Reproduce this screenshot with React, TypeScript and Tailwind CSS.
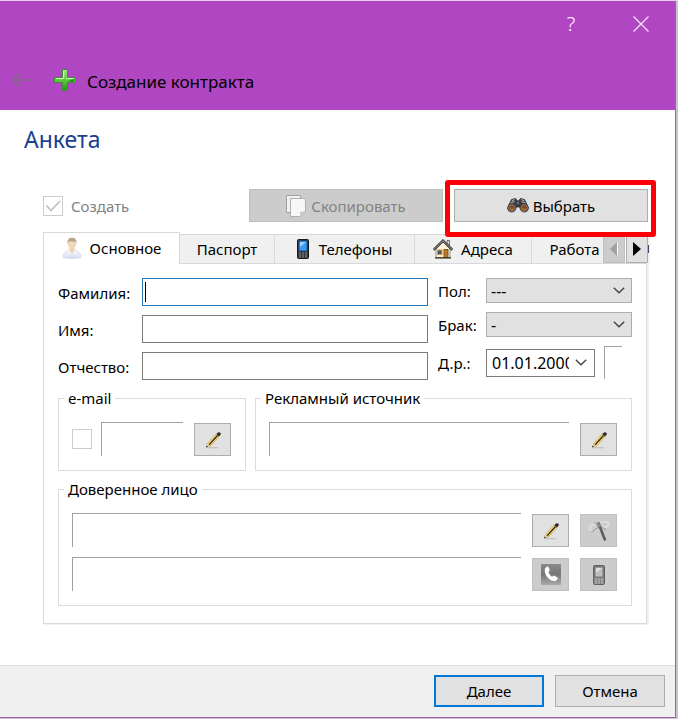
import type { ReactNode } from "react";

function ChevronIcon() {
  return (
    <svg width="12" height="7" viewBox="0 0 12 7" fill="none" stroke="#404040" strokeWidth="1.3" aria-hidden="true">
      <path d="M0.8 0.8 L6 5.8 L11.2 0.8" />
    </svg>
  );
}

function PlusIcon() {
  return (
    <svg width="22" height="22" viewBox="0 0 22 22" aria-hidden="true">
      <defs>
        <linearGradient id="plus" x1="0" y1="0" x2="0" y2="1">
          <stop offset="0" stopColor="#a5ea8c" />
          <stop offset="0.5" stopColor="#5dcb3f" />
          <stop offset="1" stopColor="#1d9a12" />
        </linearGradient>
      </defs>
      <path d="M8.5 0.5 h5 v8 h8 v5 h-8 v8 h-5 v-8 h-8 v-5 h8z" fill="url(#plus)" stroke="#3f8a35" />
      <path d="M9.5 2v7.5H2M12.5 9.5h7" fill="none" stroke="#d0f7c0" strokeWidth="1" />
      <path d="M14 12.2l6-2.2v2.5h-6z" fill="#23881a" />
    </svg>
  );
}

function PersonIcon() {
  return (
    <svg width="20" height="22" viewBox="0 0 20 22" aria-hidden="true">
      <defs>
        <linearGradient id="coat" x1="0" y1="0" x2="0" y2="1">
          <stop offset="0" stopColor="#fafafd" />
          <stop offset="1" stopColor="#d3dbee" />
        </linearGradient>
      </defs>
      <path d="M1 20.5c0-5 2.500-6.500 6.500-7.500h5c4 1 6.500 2.500 6.500 7.500-4 1.300-14 1.300-18 0z" fill="url(#coat)" stroke="#d5daea" strokeWidth="0.7" />
      <path d="M7.500 11h5v2.500L10 16.500 7.500 13.500z" fill="#ecd0b0" />
      <ellipse cx="10" cy="6.500" rx="4" ry="5.500" fill="#f1d6b8" />
      <path d="M5.600 7C5 2.500 7 .8 10 .8s5 1.700 4.400 6.200L13.500 4.800 7 4.300z" fill="#b8a68c" />
    </svg>
  );
}

function PhoneIcon({ muted = false }: { muted?: boolean }) {
  return (
    <svg width="12" height="20" viewBox="0 0 12 20" aria-hidden="true">
      <rect x="0.5" y="0.5" width="11" height="19" rx="1" fill={muted ? "#858585" : "#35383d"} stroke={muted ? "#606060" : "#17191c"} />
      <rect x="2" y="2" width="8" height="10" fill={muted ? "#bdbdbd" : "#3f99ee"} stroke={muted ? "#686868" : "#0e4e92"} strokeWidth="0.8" />
      <path d="M3 3h6L3 8z" fill={muted ? "#dedede" : "#9bd0ff"} />
      <path d="M2 14h2M5 14h2M8 14h2M2 16h2M5 16h2M8 16h2M2 18h2M5 18h2M8 18h2" stroke={muted ? "#c4c4c4" : "#8c9299"} strokeWidth="0.9" />
    </svg>
  );
}

function HouseIcon() {
  return (
    <svg width="20" height="20" viewBox="0 0 20 20" aria-hidden="true">
      <path d="M14 1.500h2.500v6L14 5z" fill="#d8d8d8" stroke="#555" strokeWidth="0.8" />
      <path d="M3 9.500L10 3l7 6.500V18.500H3z" fill="#fbf3dc" stroke="#867a62" strokeWidth="0.8" />
      <path d="M0.700 10.800L10 1.700l9.300 9.100" fill="none" stroke="#2b2b2b" strokeWidth="2.400" />
      <path d="M1 10.400L10 1.700l9 8.700" fill="none" stroke="#bdbdbd" strokeWidth="0.900" />
      <rect x="4.500" y="11" width="4.500" height="4.500" fill="#4c5a70" stroke="#e0952c" />
      <rect x="11" y="10.500" width="4" height="8" fill="#c07a25" stroke="#63411a" strokeWidth="0.8" />
      <path d="M2 18.900h16" stroke="#43382a" strokeWidth="1.400" />
    </svg>
  );
}

function CopyIcon() {
  return (
    <svg width="20" height="22" viewBox="0 0 20 22" aria-hidden="true">
      <path d="M0.500 0.500h14v17h-14z" fill="#f0f0f0" stroke="#a2a2a2" />
      <path d="M4.500 3.500h15v13l-5 5h-10z" fill="#f7f7f7" stroke="#b0b0b0" />
      <path d="M14.500 21.500c.6-2 .5-3.500 0-4.500 2 .6 3.500.4 5-.5z" fill="#dedede" stroke="#ababab" strokeWidth="0.700" />
    </svg>
  );
}

function BinocularsIcon() {
  return (
    <svg width="22" height="15" viewBox="0 0 22 15" aria-hidden="true">
      <path d="M4.500 1.500L8.500.5l2 2.500h1l2-2.500 4 1L21.300 9c.5 3-1.300 5-4 5s-4.300-2-4.500-5H9.200C9 12 7.400 14 4.700 14S.2 12 .7 9z" fill="#3c3c3e" stroke="#1d1d1f" strokeWidth="0.700" />
      <path d="M4.800 2.700l3-1.200M3.500 5l4-1.500M14.200 1.500l3 1.200M14.500 3.500l4 1.500M10 5h2" stroke="#aaaab0" strokeWidth="1.100" />
      <circle cx="4.800" cy="10" r="3.400" fill="#8b4d1d" stroke="#74747a" strokeWidth="1" />
      <circle cx="17.200" cy="10" r="3.400" fill="#8b4d1d" stroke="#74747a" strokeWidth="1" />
      <path d="M3 10.700q2 2.400 3.700 0M15.400 10.700q2 2.400 3.700 0" stroke="#d48c3c" strokeWidth="1" fill="none" />
    </svg>
  );
}

function PencilIcon() {
  return (
    <svg width="18" height="18" viewBox="0 0 18 18" aria-hidden="true">
      <path d="M3 16.800h11" stroke="#a9a9a9" strokeWidth="1" opacity="0.7" />
      <path d="M4.300 14.400L13.800 3.900" stroke="#c9a445" strokeWidth="4.400" />
      <path d="M4.600 14.100L13.300 4.500" stroke="#f5da84" strokeWidth="3.400" />
      <path d="M5 13.900L13.500 4.500" stroke="#2b2413" strokeWidth="1.300" />
      <path d="M2.500 16.200l.6-3.600 2.900 2.600z" fill="#dbc7a0" />
      <path d="M2 16.600l.6-2 1.400 1.200z" fill="#222" />
      <path d="M12.400 3.100L14 1.400q1.500-.7 2.600.6.600 1.200-.2 2L14.900 5.600z" fill="#2b2b30" />
    </svg>
  );
}

function WandIcon() {
  return (
    <svg width="22" height="22" viewBox="0 0 22 22" fill="none" aria-hidden="true">
      <path d="M9 4.500C4 4 1 6.500 1.500 9c1.500 2 5 1.600 8 .5M12 2.500c5-2 9-.5 8.500 2.500-.5 2-4 3-7 2.500" stroke="#e3e3e3" strokeWidth="1.300" />
      <path d="M11 7L3.500 12M11 5.500l7 4.500M7 2.500l3.500 4" stroke="#a0a0a0" strokeWidth="1.200" />
      <path d="M10.200 2.500L17.200 20.500" stroke="#5d5d5d" strokeWidth="2.600" />
      <path d="M10.200 2.500L12 7" stroke="#8a8a8a" strokeWidth="2" />
    </svg>
  );
}

function CallIcon() {
  return (
    <svg width="20" height="21" viewBox="0 0 20 21" aria-hidden="true">
      <defs>
        <linearGradient id="call" x1="0" y1="0" x2="0" y2="1">
          <stop offset="0" stopColor="#8a8a8a" />
          <stop offset="0.5" stopColor="#777" />
          <stop offset="1" stopColor="#aaa" />
        </linearGradient>
      </defs>
      <rect width="20" height="21" rx="1" fill="url(#call)" />
      <path d="M4 4.500L6 2.500q1-.3 1.600.8l1.100 2.200q.4 1-.5 1.700l-.8.700q1 3 3.700 4.800l1-.8q.9-.6 1.800 0l2.500 1.700q.9.900.1 1.700l-1.600 1.500C9.500 18.500 2.300 10.800 4 4.500z" fill="#fff" />
    </svg>
  );
}

function ToolButton({ label, disabled = false, children }: { label: string; disabled?: boolean; children: ReactNode }) {
  return (
    <button
      type="button"
      aria-label={label}
      disabled={disabled}
      className="flex h-[33px] w-[37px] shrink-0 items-center justify-center border border-[#adadad] bg-[#e1e1e1] disabled:border-[#bfbfbf] disabled:bg-[#cccccc]"
    >
      {children}
    </button>
  );
}

function SunkenField({ label }: { label: string }) {
  return (
    <input
      type="text"
      readOnly
      aria-label={label}
      className="h-[34px] w-0 min-w-0 flex-1 border-t border-l border-[#a0a0a0] bg-white px-1 outline-none"
    />
  );
}

function Group({ title, className = "", children }: { title: string; className?: string; children: ReactNode }) {
  return (
    <fieldset className={`min-w-0 border border-[#dcdcdc] pr-[14px] pb-[14px] pl-[13px] ${className}`}>
      <legend className="-ml-2 px-1">{title}</legend>
      {children}
    </fieldset>
  );
}

function Tab({ children, className = "" }: { children: ReactNode; className?: string }) {
  return (
    <button
      type="button"
      role="tab"
      aria-selected="false"
      className={`flex h-[30px] shrink-0 items-center justify-center border-y border-r border-[#d9d9d9] bg-[#f0f0f0] ${className}`}
    >
      {children}
    </button>
  );
}

function SelectRow({ id, label, value }: { id: string; label: string; value: string }) {
  return (
    <div className="flex items-center">
      <label htmlFor={id} className="w-12 shrink-0">{label}</label>
      <div className="relative flex-1">
        <select id={id} className="block h-[25px] w-full appearance-none border border-[#adadad] bg-[#e1e1e1] pl-1 text-base leading-5 outline-none">
          <option>{value}</option>
        </select>
        <span className="pointer-events-none absolute top-[9px] right-[7px]"><ChevronIcon /></span>
      </div>
    </div>
  );
}

const names = [
  { id: "surname", label: "Фамилия:" },
  { id: "name", label: "Имя:" },
  { id: "patronymic", label: "Отчество:" },
];

export default function App() {
  return (
    <div className="flex min-h-screen flex-col border-t border-[#e9cdee] bg-[#c9c3ca] pr-[2px] pb-px font-['Noto_Sans',sans-serif] text-[15px] leading-5 text-black">
      <div className="flex flex-1 flex-col border-r border-b border-[#a45cb0] bg-white">
        <header className="bg-[#b046c1] pb-[10px]">
          <div className="flex h-[46px] items-center justify-end gap-[50px] pr-[26px] text-white">
            <button type="button" aria-label="Справка" className="w-6 text-xl leading-6 font-light">?</button>
            <button type="button" aria-label="Закрыть">
              <svg width="16" height="16" viewBox="0 0 16 16" stroke="#f5e6f7" strokeWidth="1.200" aria-hidden="true">
                <path d="M0.500 0.500l15 15M15.500 0.500l-15 15" />
              </svg>
            </button>
          </div>
          <div className="flex h-[53px] items-center pt-3 pl-3">
            <button type="button" aria-label="Назад" disabled>
              <svg width="20" height="16" viewBox="0 0 20 16" fill="none" stroke="#93609f" strokeWidth="2.400" aria-hidden="true">
                <path d="M8 1L1.500 8 8 15M1.500 8H19" />
              </svg>
            </button>
            <span className="mr-[11px] ml-[22px]"><PlusIcon /></span>
            <h1 className="pt-1 text-[17px] leading-6">Создание контракта</h1>
          </div>
        </header>

        <main className="flex-1 pr-[27px] pb-10 pl-[43px]">
          <h2 className="-ml-[19px] pt-[11px] text-[23px] leading-9 text-[#1b3f91]">Анкета</h2>

          <div className="mt-8 flex items-center gap-[11px]">
            <label className="flex flex-1 items-center gap-2 text-[#838383]">
              <span className="relative flex size-5">
                <input type="checkbox" defaultChecked disabled className="size-5 appearance-none border border-[#cccccc] bg-white" />
                <svg className="absolute inset-0" width="20" height="20" viewBox="0 0 20 20" fill="none" stroke="#c0c0c0" strokeWidth="1.800" aria-hidden="true">
                  <path d="M3.500 9.500l4.500 5 9-9.500" />
                </svg>
              </span>
              Создать
            </label>
            <button type="button" disabled className="flex h-[33px] w-[194px] items-center justify-center gap-[5px] border border-[#bfbfbf] bg-[#cccccc] text-[#838383]">
              <CopyIcon />
              Скопировать
            </button>
            <div className="relative z-20">
              <button type="button" className="flex h-[33px] w-[194px] items-center justify-center gap-1 border border-[#adadad] bg-[#e1e1e1]">
                <BinocularsIcon />
                Выбрать
              </button>
              <span className="pointer-events-none absolute -top-[9px] -right-2 -bottom-[15px] -left-[9px] rounded-[3px] border-5 border-[#fb0007]" />
            </div>
          </div>

          <div className="relative z-10 -mr-[2px] mt-[10px] -mb-px flex h-8 items-end">
            <div role="tablist" className="flex min-w-0 flex-1 items-end overflow-hidden">
              <button
                type="button"
                role="tab"
                aria-selected="true"
                className="flex h-8 w-[137px] shrink-0 items-center justify-center gap-2 border-x border-t border-[#d9d9d9] bg-white pb-px"
              >
                <PersonIcon />
                Основное
              </button>
              <Tab className="w-[95px]">Паспорт</Tab>
              <Tab className="w-[140px] gap-[10px]">
                <PhoneIcon />
                Телефоны
              </Tab>
              <Tab className="w-[117px] gap-2">
                <HouseIcon />
                Адреса
              </Tab>
              <Tab className="w-[86px]">Работа</Tab>
            </div>
            <button type="button" disabled aria-label="Предыдущие вкладки" className="mb-px flex h-7 w-[22px] items-center justify-center border border-[#bfbfbf] bg-[#cccccc]">
              <svg width="8" height="14" viewBox="0 0 8 14" aria-hidden="true">
                <path d="M7 0v13H8V0z" fill="#fff" />
                <path d="M0 7L7 0v14z" fill="#a0a0a0" />
              </svg>
            </button>
            <button type="button" aria-label="Следующие вкладки" className="mb-px ml-px flex h-7 w-[22px] items-center justify-center border border-[#adadad] bg-[#e1e1e1]">
              <svg width="8" height="14" viewBox="0 0 8 14" aria-hidden="true">
                <path d="M8 7L0 0v14z" fill="#000" />
              </svg>
            </button>
            <span className="flex h-[30px] w-[2px] items-center bg-[#f0f0f0]">
              <span className="h-2 w-px bg-[#3b4a6b]" />
            </span>
          </div>

          <div className="mr-px border border-[#d9d9d9] px-[14px] pt-[14px] pb-[17px] shadow-[2px_1px_0_#f0f0f0]">
            <div className="flex gap-[10px]">
              <div className="flex min-w-0 flex-1 flex-col gap-[9px]">
                {names.map(({ id, label }, index) => (
                  <div key={id} className="flex items-center">
                    <label htmlFor={id} className="w-[84px] shrink-0 pt-[2px]">{label}</label>
                    <div className="relative flex-1">
                      <input
                        id={id}
                        type="text"
                        className={`block h-7 w-full border bg-white px-1 outline-none ${index === 0 ? "border-[#1f77b4]" : "border-[#7a7a7a]"}`}
                      />
                      {index === 0 && <span className="absolute top-1 left-[3px] h-5 w-px bg-black" />}
                    </div>
                  </div>
                ))}
              </div>
              <div className="flex w-[194px] shrink-0 flex-col gap-[9px]">
                <SelectRow id="gender" label="Пол:" value="---" />
                <SelectRow id="marriage" label="Брак:" value="-" />
                <div className="flex items-center">
                  <label htmlFor="birth" className="w-12 shrink-0">Д.р.:</label>
                  <div className="flex h-7 w-[109px] items-center border border-[#7a7a7a] bg-white pl-[5px]">
                    <input id="birth" type="text" defaultValue="01.01.2000" className="w-[77px] text-base leading-5 outline-none" />
                    <button type="button" aria-label="Открыть календарь" className="ml-[6px]"><ChevronIcon /></button>
                  </div>
                  <span className="ml-[9px] h-[33px] w-[18px] border-t border-l border-[#a0a0a0]" />
                </div>
              </div>
            </div>

            <div className="mt-2 flex gap-[9px]">
              <Group title="e-mail" className="w-[188px] shrink-0">
                <div className="flex items-end pt-[14px]">
                  <input type="checkbox" aria-label="Есть e-mail" className="mr-[9px] size-5 appearance-none self-center border border-[#cccccc] bg-white" />
                  <SunkenField label="Адрес e-mail" />
                  <span className="ml-[11px]"><ToolButton label="Изменить e-mail"><PencilIcon /></ToolButton></span>
                </div>
              </Group>
              <Group title="Рекламный источник" className="flex-1">
                <div className="flex items-end gap-[11px] pt-[14px]">
                  <SunkenField label="Рекламный источник" />
                  <ToolButton label="Изменить источник"><PencilIcon /></ToolButton>
                </div>
              </Group>
            </div>

            <Group title="Доверенное лицо" className="mt-2">
              <div className="flex flex-col gap-[10px] pt-[14px]">
                <div className="flex items-end gap-[11px]">
                  <SunkenField label="Имя доверенного лица" />
                  <ToolButton label="Изменить доверенное лицо"><PencilIcon /></ToolButton>
                  <ToolButton label="Заполнить" disabled><WandIcon /></ToolButton>
                </div>
                <div className="flex items-end gap-[11px]">
                  <SunkenField label="Телефон доверенного лица" />
                  <ToolButton label="Позвонить" disabled><CallIcon /></ToolButton>
                  <ToolButton label="Мобильный телефон" disabled><PhoneIcon muted /></ToolButton>
                </div>
              </div>
            </Group>
          </div>
        </main>

        <footer className="flex justify-end gap-[11px] border-t border-[#dfdfdf] bg-[#f0f0f0] pt-[9px] pr-[10px] pb-[10px]">
          <button type="button" className="h-8 w-[110px] border-2 border-[#0078d7] bg-[#e1e1e1]">Далее</button>
          <button type="button" className="h-8 w-[110px] border border-[#adadad] bg-[#e1e1e1]">Отмена</button>
        </footer>
      </div>
    </div>
  );
}
